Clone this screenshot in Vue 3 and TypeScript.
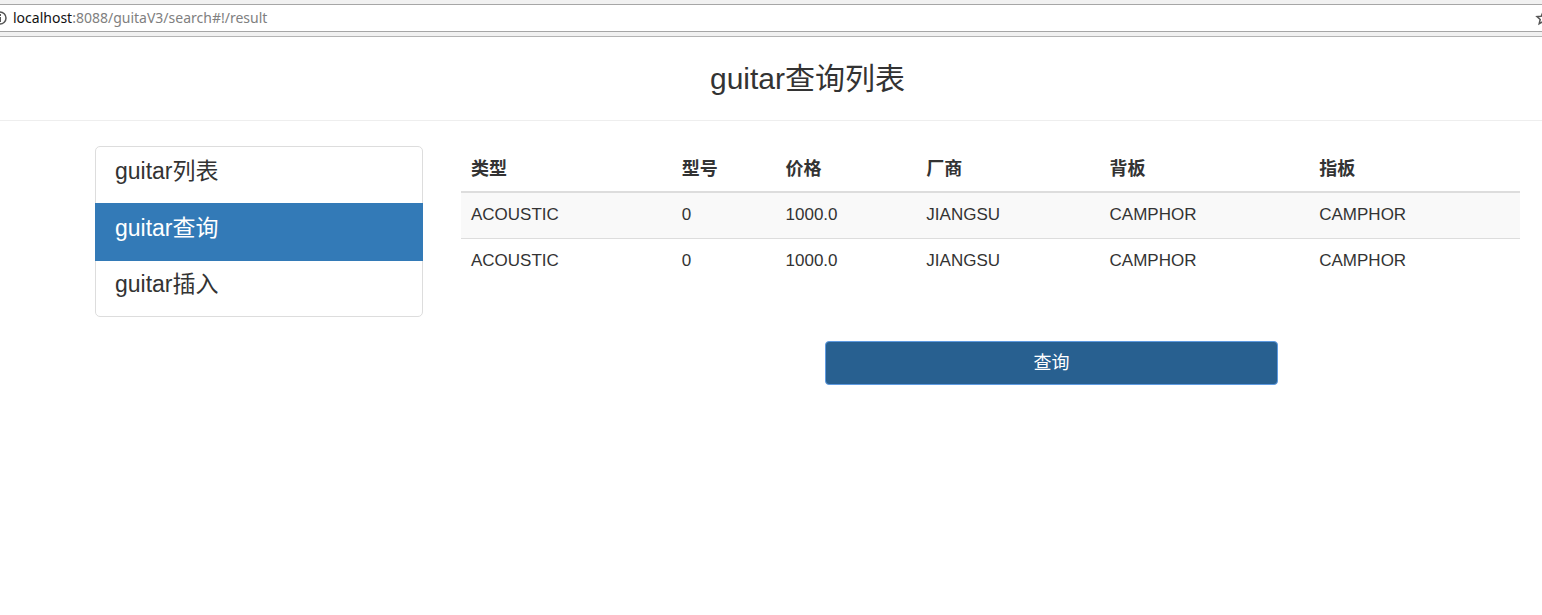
<script setup lang="ts">
import { ref } from 'vue'

interface Guitar {
  type: string
  model: string
  price: string
  builder: string
  backWood: string
  topWood: string
}

const menu: string[] = ['guitar列表', 'guitar查询', 'guitar插入']
const current = ref(1)

const columns = [
  { key: 'type', label: '类型' },
  { key: 'model', label: '型号' },
  { key: 'price', label: '价格' },
  { key: 'builder', label: '厂商' },
  { key: 'backWood', label: '背板' },
  { key: 'topWood', label: '指板' },
] as const

const guitars: Guitar[] = [
  { type: 'ACOUSTIC', model: '0', price: '1000.0', builder: 'JIANGSU', backWood: 'CAMPHOR', topWood: 'CAMPHOR' },
  { type: 'ACOUSTIC', model: '0', price: '1000.0', builder: 'JIANGSU', backWood: 'CAMPHOR', topWood: 'CAMPHOR' },
]
</script>

<template>
  <div class="page">
    <div class="toolbar">
      <div class="address">
        <svg class="info" width="13" height="16" viewBox="0 0 13 16" aria-hidden="true">
          <circle cx="0" cy="8" r="6" fill="none" stroke="#555" stroke-width="1.5" />
          <path d="M0 7v5M0 4v2" stroke="#555" stroke-width="2" />
        </svg>
        <span class="url"><span class="host">localhost</span>:8088/guitaV3/search#!/result</span>
        <svg class="star" width="7" height="16" viewBox="0 0 7 16" aria-hidden="true">
          <path
            d="M8 2.2l1.8 4 4.2.4-3.2 2.9 1 4.3L8 11.500l-3.800 2.300 1-4.300L2 6.600l4.200-.4z"
            fill="none"
            stroke="#555"
            stroke-width="1.5"
          />
        </svg>
      </div>
    </div>

    <header class="heading">
      <h1>guitar查询列表</h1>
    </header>

    <div class="content">
      <nav class="menu">
        <a
          v-for="(item, i) in menu"
          :key="item"
          href="#!/result"
          class="menu-item"
          :class="{ active: i === current }"
          @click.prevent="current = i"
        >{{ item }}</a>
      </nav>

      <main class="results">
        <table>
          <colgroup>
            <col v-for="c in columns" :key="c.key" :class="'col-' + c.key" />
          </colgroup>
          <thead>
            <tr>
              <th v-for="c in columns" :key="c.key" scope="col">{{ c.label }}</th>
            </tr>
          </thead>
          <tbody>
            <tr v-for="(g, i) in guitars" :key="i">
              <td v-for="c in columns" :key="c.key">{{ g[c.key] }}</td>
            </tr>
          </tbody>
        </table>
        <button type="button" class="query">查询</button>
      </main>
    </div>
  </div>
</template>

<style>
body {
  margin: 0;
  background: #fff;
}
</style>

<style scoped>
.page {
  min-height: 100vh;
  overflow: hidden;
  color: #333;
  font-family: "Liberation Sans", Arial, "Noto Sans CJK SC", sans-serif;
}

.toolbar {
  padding: 4px 0;
  background: #f1f1f1;
  border-bottom: 1px solid #b4b4b4;
}

.address {
  display: flex;
  align-items: center;
  height: 26px;
  border-top: 1px solid #a6a6a6;
  border-bottom: 1px solid #a6a6a6;
  background: #fff;
}

.info,
.star {
  flex: none;
}

.url {
  flex: 1;
  color: #808080;
  font: 14px/20px "Noto Sans", "Open Sans", sans-serif;
}

.host {
  color: #111;
}

.heading {
  padding: 20px 0 20px 73px;
  border-bottom: 1px solid #eee;
  text-align: center;
}

h1 {
  margin: 0;
  font-size: 30px;
  font-weight: 400;
  line-height: 43px;
}

.content {
  display: grid;
  grid-template-columns: 328fr 1059fr;
  gap: 38px;
  align-items: start;
  padding: 25px 22px 0 95px;
}

.menu {
  box-sizing: border-box;
  border: 1px solid #ddd;
  border-radius: 5px;
}

.menu-item {
  display: block;
  padding: 8px 19px 16px;
  color: #333;
  font-size: 23px;
  line-height: 32px;
  text-decoration: none;
}

.menu-item.active {
  margin: 0 -1px -1px;
  padding: 9px 20px 17px;
  background: #337ab7;
  color: #fff;
  position: relative;
}

table {
  width: 100%;
  table-layout: fixed;
  border-collapse: separate;
  border-spacing: 0;
  font-size: 17px;
  line-height: 25px;
  text-align: left;
}

th {
  padding: 11px 10px 9px;
  border-bottom: 2px solid #ddd;
  font-size: 18px;
}

td {
  padding: 9px 10px 11px;
}

tbody tr + tr td {
  border-top: 1px solid #ddd;
}

tbody tr:nth-child(odd) {
  background: #f9f9f9;
}

.col-type {
  width: 19.9%;
}

.col-model {
  width: 9.8%;
}

.col-price {
  width: 13.3%;
}

.col-builder {
  width: 17.3%;
}

.col-backWood {
  width: 19.8%;
}

.col-topWood {
  width: 19.9%;
}

.query {
  display: block;
  width: 42.7%;
  margin: 57px 22.9% 0 auto;
  padding: 8px 16px;
  border: 1px solid #5e9ae0;
  border-radius: 4px;
  background: #286090;
  color: #fff;
  font-family: inherit;
  font-size: 18px;
  line-height: 26px;
}
</style>
